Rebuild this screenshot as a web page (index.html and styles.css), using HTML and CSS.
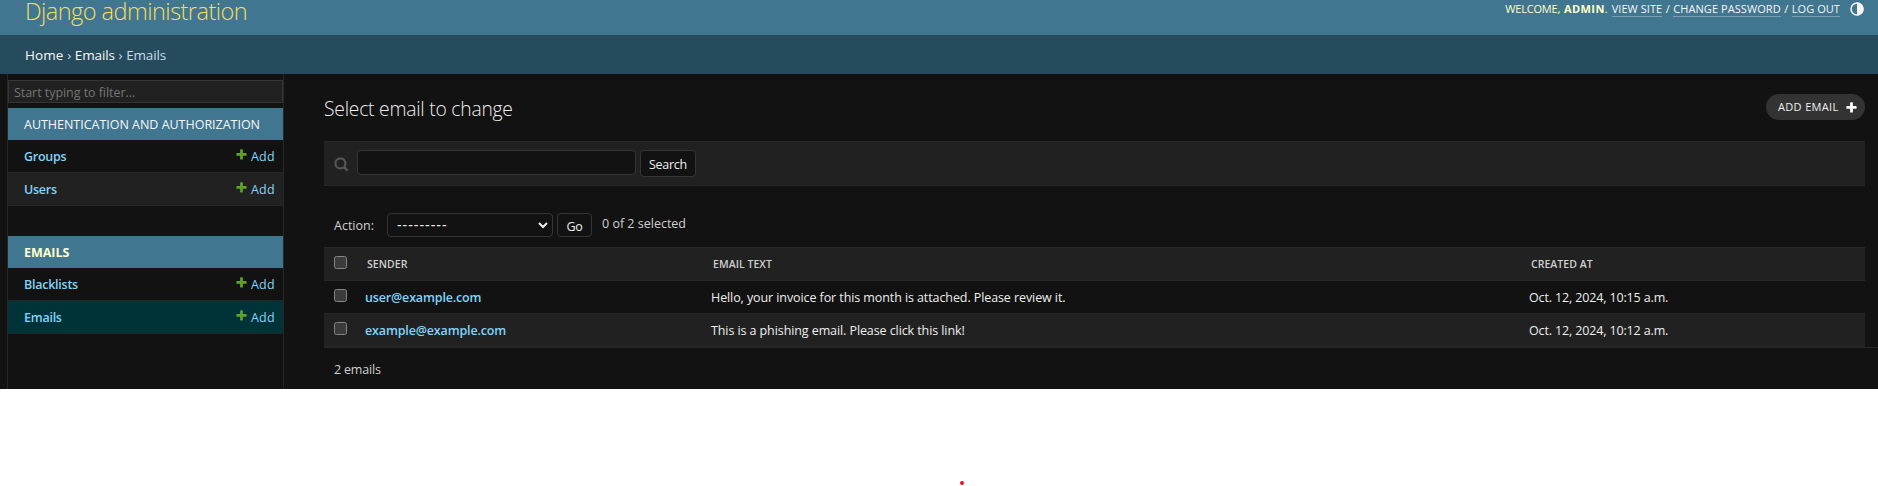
FILE: index.html
```html
<!DOCTYPE html>
<html lang="en">
<head>
<meta charset="utf-8">
<title>Select email to change | Django site admin</title>
<link rel="stylesheet" href="styles.css">
</head>
<body>
<svg width="0" height="0" class="defs">
  <symbol id="plus" viewBox="0 0 1792 1792"><path d="M1600 796v192q0 40-28 68t-68 28h-416v416q0 40-28 68t-68 28h-192q-40 0-68-28t-28-68v-416h-416q-40 0-68-28t-28-68v-192q0-40 28-68t68-28h416v-416q0-40 28-68t68-28h192q40 0 68 28t28 68v416h416q40 0 68 28t28 68z"/></symbol>
</svg>
<div class="container">
  <header class="header">
    <h1 class="site-name">Django administration</h1>
    <div class="user-tools">
      <span class="welcome">WELCOME,</span><strong class="user">ADMIN</strong><span class="dot">.</span>
      <a class="tool">VIEW SITE</a><span class="sep">/</span><a class="tool">CHANGE PASSWORD</a><span class="sep">/</span><a class="tool">LOG OUT</a>
      <svg class="theme" viewBox="0 0 14 14"><circle cx="7" cy="7" r="6" fill="none" stroke="#f7f7f7" stroke-width="1.5"/><path d="M7 .5a6.5 6.5 0 0 1 0 13z" fill="#f7f7f7"/></svg>
    </div>
  </header>
  <nav class="breadcrumbs"><a class="home">Home</a><span class="chev">›</span><a>Emails</a><span class="chev">›</span><span class="here">Emails</span></nav>
  <div class="main">
    <nav class="sidebar">
      <input class="filter" type="text" placeholder="Start typing to filter...">
      <section class="module">
        <h2 class="caption">AUTHENTICATION AND AUTHORIZATION</h2>
        <div class="model"><a class="name">Groups</a><a class="add"><svg class="plus"><use href="#plus"/></svg>Add</a></div>
        <div class="model alt"><a class="name">Users</a><a class="add"><svg class="plus"><use href="#plus"/></svg>Add</a></div>
      </section>
      <section class="module">
        <h2 class="caption section">EMAILS</h2>
        <div class="model"><a class="name">Blacklists</a><a class="add"><svg class="plus"><use href="#plus"/></svg>Add</a></div>
        <div class="model current"><a class="name">Emails</a><a class="add"><svg class="plus"><use href="#plus"/></svg>Add</a></div>
      </section>
    </nav>
    <main class="content">
      <div class="title-row">
        <h1 class="title">Select email to change</h1>
        <a class="add-email">ADD EMAIL<svg class="plus white"><use href="#plus"/></svg></a>
      </div>
      <form class="toolbar">
        <svg class="search-icon" viewBox="0 0 15 15" fill="none" stroke="#555" stroke-width="2.2"><circle cx="6.4" cy="6.4" r="5"/><path d="M10 10l3.6 3.6" stroke-width="2.6"/></svg>
        <input class="query" type="text"><button class="btn search" type="button">Search</button>
      </form>
      <div class="actions">
        <span class="label">Action:</span>
        <div class="select"><span>---------</span><svg width="10" height="7" viewBox="0 0 10 7" fill="none" stroke="#eee" stroke-width="2"><path d="M1 1l4 4 4-4"/></svg></div>
        <button class="btn go" type="button">Go</button>
        <span class="counter">0 of 2 selected</span>
      </div>
      <table class="results">
        <colgroup><col class="c-check"><col class="c-sender"><col class="c-text"><col></colgroup>
        <thead><tr><th class="check"><input type="checkbox"></th><th>SENDER</th><th>EMAIL TEXT</th><th>CREATED AT</th></tr></thead>
        <tbody>
          <tr><td class="check"><input type="checkbox"></td><td class="sender">user@example.com</td><td>Hello, your invoice for this month is attached. Please review it.</td><td class="date">Oct. 12, 2024, 10:15 a.m.</td></tr>
          <tr class="alt"><td class="check"><input type="checkbox"></td><td class="sender">example@example.com</td><td>This is a phishing email. Please click this link!</td><td class="date">Oct. 12, 2024, 10:12 a.m.</td></tr>
        </tbody>
      </table>
      <p class="paginator">2 emails</p>
    </main>
  </div>
</div>
<div class="marker"></div>
</body>
</html>
```
FILE: styles.css
```css
* { box-sizing: border-box; }
body { margin: 0; background: #fff; color: #eee; font: 12.5px "Open Sans", "Noto Sans", sans-serif; overflow: hidden; }
h1, h2, p { margin: 0; font-weight: 400; }
.defs { position: absolute; }
.container { height: 389px; background: #121212; display: flex; flex-direction: column; }

.header { height: 35px; flex: none; background: #417690; display: flex; justify-content: space-between; padding: 0 12px 0 25px; }
.site-name { font-size: 23.5px; font-weight: 300; line-height: 22px; letter-spacing: -.53px; color: #f5dd5d; white-space: nowrap; }
.user-tools { display: flex; align-items: flex-start; font-size: 11px; line-height: 16px; padding-top: 1px; height: 20px; color: #ffc; }
.welcome { letter-spacing: -.21px; margin-right: 4px; }
.user { letter-spacing: .4px; }
.dot { margin-right: 4px; }
.tool { color: #f7f7f7; letter-spacing: .07px; border-bottom: 1px solid rgba(255, 255, 255, .3); height: 16px; }
.sep { width: 11px; text-align: center; }
.theme { width: 14px; height: 14px; margin: 1px 2px 0 10px; }

.breadcrumbs { height: 39px; flex: none; background: #264b5d; color: #c4dce8; display: flex; padding-left: 25px; font-size: 13.5px; line-height: 41px; letter-spacing: -.16px; }
.breadcrumbs a { color: #f7f7f7; }
.breadcrumbs .home { letter-spacing: .05px; }
.chev { width: 11.5px; text-align: center; }

.main { flex: 1; display: flex; min-height: 0; }
.sidebar { width: 277px; flex: none; margin-left: 7px; border: solid #272727; border-width: 0 1px; padding-top: 6px; }
.filter { display: block; width: 100%; height: 23px; margin-bottom: 5px; padding: 2px 5px 0; background: #212121; border: 1px solid #353535; font: inherit; letter-spacing: -.05px; color: #eee; }
.filter::placeholder { color: #757575; opacity: 1; }
.module { margin-bottom: 30px; }
.caption { height: 32px; padding-left: 16px; background: #417690; color: #f7f7f7; font-size: 12.5px; line-height: 34px; letter-spacing: -.02px; }
.section { font-weight: 700; color: #ffc; }
.model { height: 33px; padding: 0 8px 0 16px; border-bottom: 1px solid #272727; line-height: 34px; display: flex; justify-content: space-between; color: #81d4fa; }
.alt { background: #212121; }
.current { background: #003338; }
.name { font-weight: 600; letter-spacing: -.25px; }
.add { display: flex; letter-spacing: .3px; }
.plus { width: 13px; height: 13px; fill: #5fa225; margin: 8px 3px 0 0; }

.content { flex: 1; padding-left: 40px; min-width: 0; }
.title-row { display: flex; justify-content: space-between; padding-right: 13px; height: 67px; }
.title { font-size: 19.3px; font-weight: 300; line-height: 28px; margin-top: 21px; letter-spacing: -.23px; }
.add-email { margin-top: 20px; height: 26px; width: 99px; border-radius: 13px; background: #333; display: flex; padding-left: 12px; font-size: 11px; line-height: 26px; letter-spacing: .34px; white-space: nowrap; }
.white { fill: #fff; margin: 7px 0 0 6px; flex: none; }
.toolbar { height: 45px; margin-right: 13px; padding: 8px 9px; background: #212121; border: solid #272727; border-width: 1px 0; display: flex; }
.search-icon { width: 15px; height: 15px; margin: 7px 8px 0 1px; }
.query { width: 279px; height: 25px; background: #121212; border: 1px solid #353535; border-radius: 4px; }
.btn { background: #121212; color: #eee; border: 1px solid #353535; border-radius: 4px; font: inherit; padding: 0; letter-spacing: -.28px; }
.search { width: 56px; height: 27px; margin-left: 4px; padding-top: 1px; }
.actions { display: flex; padding: 27px 0 0 10px; height: 61px; line-height: 25px; color: #d0d0d0; }
.label { width: 53px; }
.select { width: 166px; height: 24px; border: 1px solid #353535; border-radius: 4px; display: flex; justify-content: space-between; align-items: center; padding: 0 4px 0 9px; font: 14px "Liberation Sans", sans-serif; letter-spacing: .95px; color: #eee; }
.go { width: 35px; height: 24px; margin: 0 10px 0 4px; padding-bottom: 1px; }
.counter { line-height: 21px; }

.results { width: calc(100% - 13px); table-layout: fixed; border-collapse: separate; border-spacing: 0; }
.c-check { width: 33px; }
.c-sender { width: 346px; }
.c-text { width: 818px; }
.results th { height: 34px; padding: 0 0 1px 10px; background: #212121; border: solid #272727; border-width: 1px 0; text-align: left; font-size: 10.5px; font-weight: 600; letter-spacing: .05px; color: #d0d0d0; }
.results td { height: 33px; padding: 0 0 0 8px; border-bottom: 1px solid #272727; letter-spacing: -.09px; white-space: nowrap; }
.results .alt td { height: 34px; border-bottom-width: 2px; }
.results .sender { font-weight: 600; letter-spacing: -.15px; color: #81d4fa; }
.results .date { letter-spacing: -.14px; }
.results .check { padding: 8px 0 0 10px; vertical-align: top; }
.check input { appearance: none; display: block; width: 13px; height: 13px; margin: 0; background: #3b3b3b; border: 1px solid #858585; border-radius: 2.5px; }
.paginator { border-top: 1px solid #272727; margin-top: -1px; padding: 1px 0 0 10px; line-height: 42px; height: 42px; letter-spacing: -.18px; color: #d0d0d0; }
.marker { width: 4px; height: 4px; margin: 92px 0 0 960px; border-radius: 50%; background: #e81224; }
```
